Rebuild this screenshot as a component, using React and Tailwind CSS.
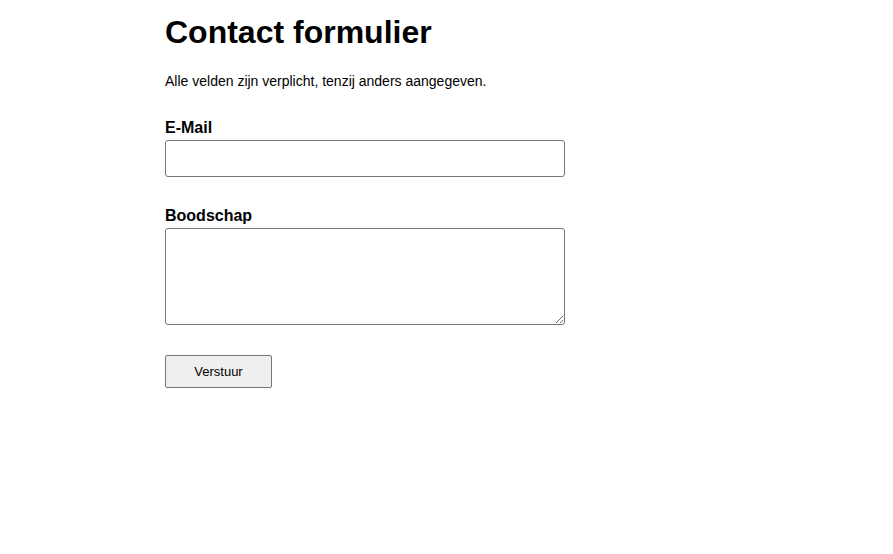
export default function App() {
  return (
    <main className="min-h-screen bg-white pl-[165px] pt-[14px] text-black font-['Liberation_Sans',Arial,sans-serif]">
      <h1 className="text-[32px] font-bold leading-[37px]">Contact formulier</h1>
      <p className="mt-[22px] text-[14px] leading-[16px]">Alle velden zijn verplicht, tenzij anders aangegeven.</p>
      <form className="mt-[30px] flex flex-col" onSubmit={(e) => e.preventDefault()}>
        <label htmlFor="email" className="text-[16px] font-bold leading-[18px]">E-Mail</label>
        <input
          id="email"
          type="email"
          className="mt-[3px] h-[37px] w-[400px] rounded-[3px] border border-[#767676] bg-white px-2 text-[14px]"
        />
        <label htmlFor="msg" className="mt-[30px] text-[16px] font-bold leading-[18px]">Boodschap</label>
        <textarea
          id="msg"
          className="mt-[3px] h-[97px] w-[400px] rounded-[3px] border border-[#767676] bg-white px-2 text-[14px]"
        />
        <button
          type="submit"
          className="mt-[30px] h-[33px] w-[107px] rounded-[2px] border border-[#767676] bg-[#efefef] text-[13px] leading-[15px]"
        >
          Verstuur
        </button>
      </form>
    </main>
  );
}
